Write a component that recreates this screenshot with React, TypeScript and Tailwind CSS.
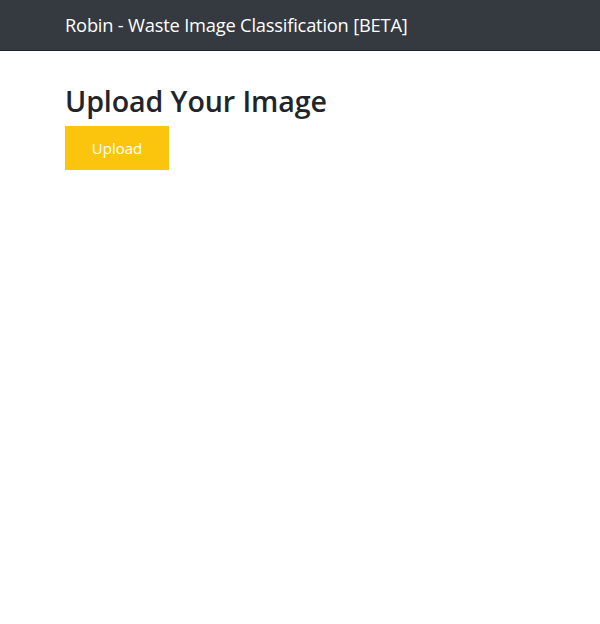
import React from "react";

const App: React.FC = () => {
  return (
    <div className="min-h-[624px] bg-white font-['Open_Sans',sans-serif] text-[#212529]">
      <header className="h-[51px] bg-[#343a40] border-b border-[#1f2226] flex items-center px-[65px]">
        <span className="text-[18.3px] text-white leading-none tracking-[-0.2px]">
          Robin - Waste Image Classification [BETA]
        </span>
      </header>

      <main className="px-[65px] pt-[32px]">
        <h1 className="text-[28.6px] font-semibold leading-[36px] tracking-[-0.1px]">
          Upload Your Image
        </h1>
        <button className="mt-[7px] w-[104px] h-[44px] bg-[#fac50c] text-white text-[15px]">
          Upload
        </button>
      </main>
    </div>
  );
};

export default App;
